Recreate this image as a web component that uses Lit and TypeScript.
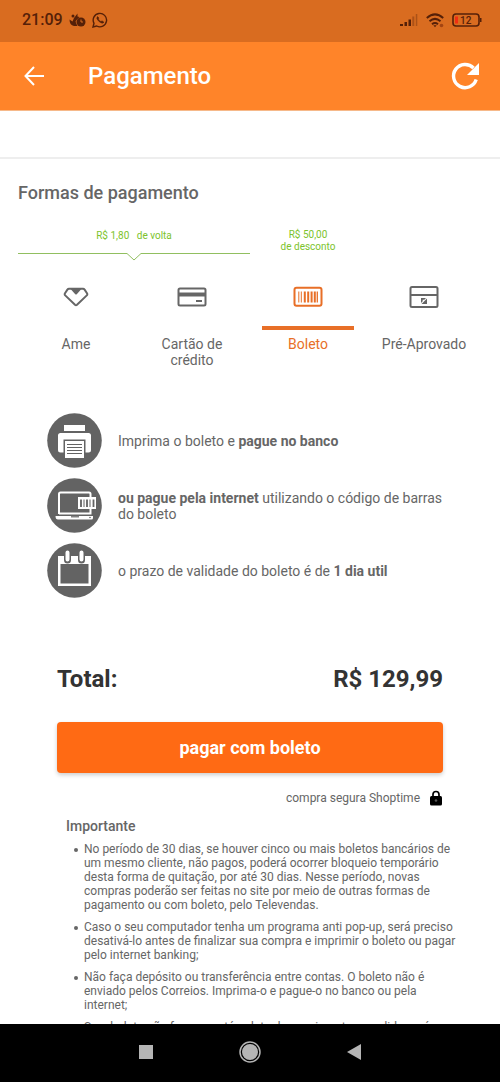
import { LitElement, html, css, svg } from "lit";
import { customElement, state } from "lit/decorators.js";

const ameIcon = svg`<svg width="26" height="20" viewBox="0 0 26 20" fill="none" stroke="currentColor" stroke-width="2" stroke-linejoin="round">
  <path d="M6 1.800h14q1 0 1.600.8l2.400 3.600q.7 1.200-.2 2.200L14 17.800q-1 .9-2 0L2.200 8.400q-.9-1-.2-2.200L4.400 2.600Q5 1.800 6 1.800Z"/>
  <path d="M9 2h8l-4 4.500Z" fill="currentColor"/></svg>`;
const cardIcon = svg`<svg width="30" height="20" viewBox="0 0 30 20" fill="none" stroke="currentColor" stroke-width="2">
  <rect x="1.500" y="1.500" width="27" height="17" rx="1.500"/>
  <path d="M1 7.500h28" stroke-width="4"/><path d="M19 14h6"/></svg>`;
const boletoIcon = svg`<svg width="30" height="22" viewBox="0 0 30 22" fill="none" stroke="currentColor" stroke-width="2">
  <rect x="1.500" y="1.800" width="27" height="18" rx="2"/>
  <path d="M5.800 5.500v11M8.300 5.500v11" stroke-width="1"/><path d="M11.800 5.500v11M15.200 5.500v11M18.600 5.500v11M21.800 5.500v11"/><path d="M24.300 5.500v11" stroke-width="1.300"/></svg>`;
const approvedIcon = svg`<svg width="30" height="24" viewBox="0 0 30 24" fill="none" stroke="currentColor" stroke-width="2">
  <rect x="1.500" y="2" width="27" height="20" rx="1.500"/><path d="M2 10h26"/>
  <path d="M12 18v-5h5l-1.700 1.700h-1.600V16.300Z" fill="currentColor" stroke="none"/>
  <path d="M18 13.500V19h-5.500Z" fill="currentColor" stroke="none"/></svg>`;

const printerIcon = svg`<svg viewBox="0 0 55 55"><circle cx="27.500" cy="27.500" r="27.300" fill="#636363"/>
  <path d="M17 12h21v6H17Z" fill="#fff"/><path d="M13.500 20h28a2.500 2.500 0 0 1 2.500 2.500V37a2.500 2.500 0 0 1-2.500 2.500H38.500V26.500H16.500V39.500H13.500A2.500 2.500 0 0 1 11 37V22.500A2.500 2.500 0 0 1 13.500 20Z" fill="#fff"/>
  <path d="M18 28h19v17H18Z" fill="#fff"/><path d="M20 31.500h15M20 34.500h15M20 37.500h15M20 40.500h15" stroke="#636363"/></svg>`;
const laptopIcon = svg`<svg viewBox="0 0 55 55"><circle cx="27.500" cy="27.500" r="27.300" fill="#636363"/>
  <path d="M12 36V16q0-1.500 1.500-1.500H42q1.500 0 1.500 1.500V19M12 35.500H43.500V31" fill="none" stroke="#fff" stroke-width="2"/>
  <path d="M8.500 38H46v2q0 1.500-1.500 1.500H11Q8.500 41.500 8.500 38Z" fill="#fff"/><path d="M24 38.800h8" stroke="#636363" stroke-width="1.200"/><circle cx="43" cy="39.500" r=".8" fill="#636363"/>
  <path d="M31 19h18v12H31Z" fill="#fff"/><path d="M34 21.500v7.500M40 21.500v7.500M46.500 21.500v7.500" stroke="#636363" stroke-width="1.800"/><path d="M37 21.500v7.500M43 21.500v7.500" stroke="#636363"/></svg>`;
const calendarIcon = svg`<svg viewBox="0 0 55 55"><circle cx="27.500" cy="27.500" r="27.300" fill="#636363"/>
  <path d="M11 13h33v30H11Z" fill="#fff"/><path d="M13.500 21h28v19.500h-28Z" fill="#636363"/>
  <path d="M20.500 10v7M34.500 10v7" stroke="#636363" stroke-width="7" stroke-linecap="round"/><path d="M20.500 9.500v7M34.500 9.500v7" stroke="#fff" stroke-width="4" stroke-linecap="round"/></svg>`;

const methods = [
  { id: "ame", label: "Ame", icon: ameIcon },
  { id: "card", label: "Cartão de crédito", icon: cardIcon },
  { id: "boleto", label: "Boleto", icon: boletoIcon },
  { id: "approved", label: "Pré-Aprovado", icon: approvedIcon },
];

const notes = [
  "No período de 30 dias, se houver cinco ou mais boletos bancários de um mesmo cliente, não pagos, poderá ocorrer bloqueio temporário desta forma de quitação, por até 30 dias. Nesse período, novas compras poderão ser feitas no site por meio de outras formas de pagamento ou com boleto, pelo Televendas.",
  "Caso o seu computador tenha um programa anti pop-up, será preciso desativá-lo antes de finalizar sua compra e imprimir o boleto ou pagar pelo internet banking;",
  "Não faça depósito ou transferência entre contas. O boleto não é enviado pelos Correios. Imprima-o e pague-o no banco ou pela internet;",
  "Se o boleto não for pago até a data do vencimento, o pedido será automaticamente cancelado.",
];

@customElement("app-root")
export class AppRoot extends LitElement {
  @state() private selected = "boleto";

  static styles = css`
    :host { display: flex; flex-direction: column; height: 100vh; background: #fff; color: #666; font-family: Roboto, sans-serif; font-size: 14px; line-height: 16px; }
    * { box-sizing: border-box; }
    h1, h2, h3, p, ul { margin: 0; padding: 0; }
    button { border: 0; padding: 0; background: none; color: inherit; font: inherit; cursor: pointer; }
    svg { display: block; flex: none; }
    .status { flex: none; height: 42px; padding: 0 18px 2px 22px; display: flex; align-items: center; justify-content: space-between; background: #d96c20; color: #552008; }
    .group { display: flex; align-items: center; gap: 6px; }
    .group.right { gap: 8px; }
    .time { font-size: 16px; font-weight: 500; }
    .bar { flex: none; height: 69px; padding: 0 20px 0 22px; display: flex; align-items: center; background: #ff8429; color: #fff; border-bottom: 1px solid #f6b98a; }
    .title { flex: 1; margin-left: 42px; font-size: 24px; line-height: 32px; font-weight: 500; }
    .content { flex: 1; min-height: 0; overflow-y: auto; scrollbar-width: none; }
    .blank { height: 48px; border-bottom: 2px solid #eee; }
    .payment { padding: 24px 18px 0; }
    .heading { font-size: 18px; line-height: 20px; font-weight: 500; }
    .offers { display: grid; grid-template-columns: repeat(4, 1fr); margin-top: 26px; color: #7cc32c; font-size: 10px; line-height: 12px; text-align: center; }
    .cashback { grid-column: span 2; padding-top: 1px; white-space: pre; }
    .bracket { display: flex; margin-top: 11px; color: #91bf60; }
    .rule { flex: 1; height: 1px; background: currentColor; }
    .tabs { display: grid; grid-template-columns: repeat(4, 1fr); margin-top: 15px; }
    .tab { display: grid; grid-template-rows: 44px 4px auto; justify-items: center; align-content: start; row-gap: 6px; }
    .glyph { height: 42px; display: grid; place-items: center; }
    .mark { width: 80%; height: 4px; }
    .tab.on { color: #e86f27; }
    .tab.on .mark { background: currentColor; }
    .name { max-width: 90px; }
    .steps { list-style: none; display: grid; gap: 10px; padding: 45px 29px 0; }
    .step { display: flex; align-items: center; gap: 16px; }
    .disc { flex: none; width: 55px; }
    b { font-weight: 700; }
    .checkout { padding: 65px 57px 0; }
    .total { display: flex; justify-content: space-between; color: #333; font-size: 24px; line-height: 32px; font-weight: 700; }
    .pay { width: 100%; height: 51px; margin-top: 27px; border-radius: 4px; background: #ff6a14; color: #fff; font-size: 18px; font-weight: 700; box-shadow: 0 2px 4px #0003; }
    .secure { display: flex; align-items: center; justify-content: flex-end; gap: 9px; margin-top: 17px; font-size: 12px; }
    .important { padding: 12px 40px 24px 66px; }
    .subheading { font-size: 14px; line-height: 16px; font-weight: 500; }
    .notes { list-style: none; margin-top: 8px; padding-left: 8px; display: grid; gap: 8px; font-size: 12px; line-height: 14px; }
    .notes li { display: flex; gap: 6px; }
    .notes li::before { content: ""; flex: none; width: 4px; height: 4px; margin-top: 6px; border-radius: 50%; background: currentColor; }
    .nav { flex: none; height: 58px; padding-bottom: 2px; display: flex; align-items: center; justify-content: center; gap: 80px; background: #000; color: #b5b5b5; }
  `;

  render() {
    return html`
      <div class="status">
        <div class="group">
          <span class="time">21:09</span>
          <svg width="17" height="16" viewBox="0 0 17 16" fill="currentColor"><path d="M5 6 8.500 1.500V4.500L10.500 5 7.500 8Q6 9 7 11L8.500 14H5Q.5 13 .5 7.500L3.500 9.500Z"/><circle cx="4" cy="4" r="1.500"/><circle cx="12" cy="10" r="4.500"/><path d="M12 7.500V10h2" fill="none" stroke="#d96c20"/></svg>
          <svg width="16" height="16" viewBox="0 0 16 16" fill="none" stroke="currentColor" stroke-width="1.400"><path d="m1 15 1-3.700A6.700 6.700 0 1 1 4.700 14Z"/><path d="M5.500 4.500q-2 2 1.500 5t5 .8l-2-1.500-1 .8Q7 8.600 6.300 7l.7-1Z" fill="currentColor" stroke-width=".5"/></svg>
        </div>
        <div class="group right">
          <svg width="18" height="14" viewBox="0 0 18 14" fill="currentColor"><path d="M0 11h3v2H0ZM4.500 9h2.500v4H4.500ZM8.500 6.500H11V13H8.500Z"/><path d="M12.300 3.500h2V13h-2ZM15.800 1h1.500v12h-1.500Z" opacity=".35"/></svg>
          <svg width="18" height="15" viewBox="0 0 18 15" fill="none" stroke="currentColor" stroke-width="2"><path d="M.8 5Q9-2.200 17.200 5M3.500 8.200q5.500-4.700 11 0M6 11.200q3-2.400 6 0"/><path d="m7.300 12.300 1.700 2 1.700-2Z" fill="currentColor" stroke="none"/><circle cx="15.500" cy="12.500" r="1.800" fill="#a34412" stroke="none"/></svg>
          <svg width="30" height="14" viewBox="0 0 30 14"><rect x="1" y="1" width="26" height="12" rx="3" fill="none" stroke="currentColor" stroke-width="1.600"/><path d="M28 5h1.500v4H28Z" fill="currentColor"/><path d="M3 3.500h3v7H3Z" fill="#f02e12"/><text x="8" y="10.500" font-size="10" font-weight="500" fill="currentColor">12</text></svg>
        </div>
      </div>
      <header class="bar">
        <button aria-label="Voltar"><svg width="24" height="24" viewBox="0 0 24 24" fill="none" stroke="currentColor" stroke-width="2"><path d="M22 12H4M12 3 3.500 12 12 21"/></svg></button>
        <h1 class="title">Pagamento</h1>
        <button aria-label="Atualizar"><svg width="30" height="30" viewBox="0 0 30 30"><path d="M26.200 18.500A11.600 11.600 0 1 1 23.500 7" fill="none" stroke="currentColor" stroke-width="3.400"/><path d="M29 2v12H17Z" fill="currentColor"/></svg></button>
      </header>
      <main class="content">
        <div class="blank"></div>
        <section class="payment">
          <h2 class="heading">Formas de pagamento</h2>
          <div class="offers">
            <div class="cashback">R$ 1,80   de volta<div class="bracket"><span class="rule"></span><svg width="14" height="8" viewBox="0 0 14 8" fill="none" stroke="currentColor"><path d="m0 .5 7 6.500 7-6.500"/></svg><span class="rule"></span></div></div>
            <div>R$ 50,00<br>de desconto</div>
          </div>
          <div class="tabs" role="tablist">
            ${methods.map(m => html`<button class="tab ${m.id === this.selected ? "on" : ""}" role="tab" aria-selected=${m.id === this.selected} @click=${() => (this.selected = m.id)}>
              <span class="glyph">${m.icon}</span><span class="mark"></span><span class="name">${m.label}</span>
            </button>`)}
          </div>
          <ul class="steps">
            <li class="step"><span class="disc">${printerIcon}</span><p>Imprima o boleto e <b>pague no banco</b></p></li>
            <li class="step"><span class="disc">${laptopIcon}</span><p><b>ou pague pela internet</b> utilizando o código de barras do boleto</p></li>
            <li class="step"><span class="disc">${calendarIcon}</span><p>o prazo de validade do boleto é de <b>1 dia util</b></p></li>
          </ul>
        </section>
        <section class="checkout">
          <div class="total"><span>Total:</span><span>R$ 129,99</span></div>
          <button class="pay">pagar com boleto</button>
          <div class="secure">compra segura Shoptime
            <svg width="14" height="16" viewBox="0 0 14 16"><rect x="1" y="6" width="12" height="9.500" rx="1.500" fill="#000"/><path d="M4 7V4.500a3 3 0 0 1 6 0V7" fill="none" stroke="#000" stroke-width="1.700"/><circle cx="7" cy="10.500" r="1.300" fill="#555"/></svg>
          </div>
        </section>
        <section class="important">
          <h3 class="subheading">Importante</h3>
          <ul class="notes">${notes.map(n => html`<li>${n}</li>`)}</ul>
        </section>
      </main>
      <nav class="nav">
        <button aria-label="Recentes"><svg width="24" height="24" viewBox="0 0 24 24"><path d="M5 5h14v14H5Z" fill="currentColor"/></svg></button>
        <button aria-label="Início"><svg width="24" height="24" viewBox="0 0 24 24"><circle cx="12" cy="12" r="10" fill="none" stroke="currentColor" stroke-width="1.500"/><circle cx="12" cy="12" r="8" fill="currentColor"/></svg></button>
        <button aria-label="Voltar ao anterior"><svg width="24" height="24" viewBox="0 0 24 24"><path d="M19 4v16L5 12Z" fill="currentColor"/></svg></button>
      </nav>
    `;
  }
}
